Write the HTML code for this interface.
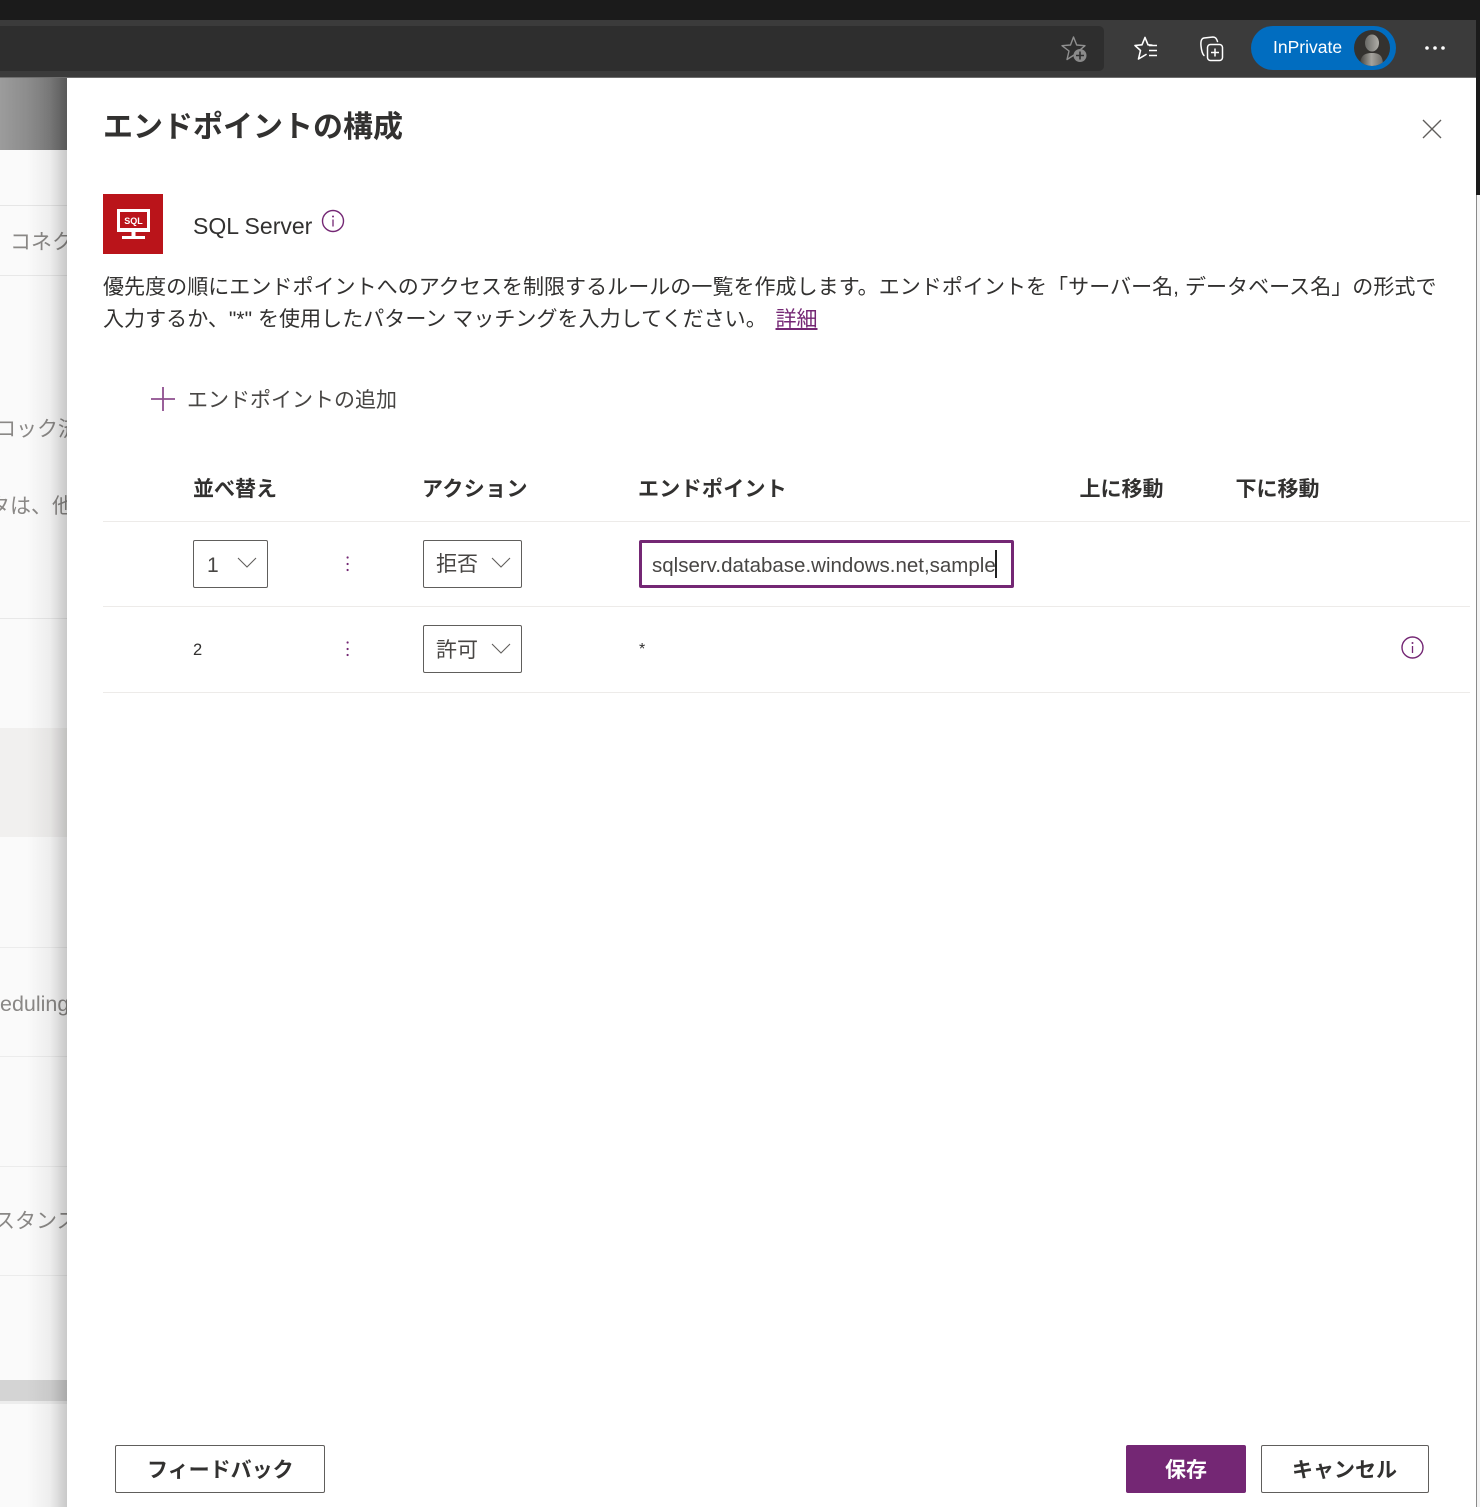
<!DOCTYPE html>
<html lang="ja">
<head>
<meta charset="utf-8">
<style>
html,body{margin:0;padding:0;background:#fff}
#p{position:relative;width:1480px;height:1507px;overflow:hidden;background:#fff;font-family:"Liberation Sans","Noto Sans CJK JP",sans-serif;color:#323130}
#p div,#p span.t,#p svg{position:absolute}
.t{position:absolute;white-space:nowrap;line-height:1}
.b{font-weight:700}
.line{background:#edebe9;height:1px}
.box{border:1px solid #605e5c;border-radius:2px;box-sizing:border-box;background:#fff}
</style>
</head>
<body>
<div id="p">
  <!-- browser chrome -->
  <div style="left:0;top:0;width:1480px;height:20px;background:#1b1b1b"></div>
  <div style="left:0;top:20px;width:1476px;height:58px;background:#3b3b3b"></div>
  <div style="left:1476px;top:20px;width:4px;height:175px;background:#1b1b1b"></div>
  <div style="left:0;top:77px;width:1476px;height:1px;background:#6e6e6e"></div>
  <div style="left:0;top:26px;width:1104px;height:45px;background:#2e2e2e;border-radius:0 5px 5px 0"></div>

  <!-- favorite add icon -->
  <svg style="left:1058px;top:34px" width="32" height="30" viewBox="0 0 32 30" fill="none">
    <path d="M15.5 3 L18.7 11 L27 11.7 L20.7 17 L22.5 25 L16 21 L9 25.5 L11 17 L4 11.7 L12.5 11 Z" stroke="#8f8f8f" stroke-width="1.4" stroke-linejoin="round"/>
    <circle cx="22" cy="21.5" r="6.5" fill="#8a8a8a"/>
    <path d="M22 17.5v8M18 21.5h8" stroke="#2e2e2e" stroke-width="1.6"/>
  </svg>
  <!-- favorites icon -->
  <svg style="left:1132px;top:34px" width="30" height="28" viewBox="0 0 30 28" fill="none">
    <path d="M13 3.5 L16 10.8 L20 11.2 M3 11.5 L10 10.8 L13 3.5 M3 11.5 L8.5 16.5 L6.5 25 L14 20.5" stroke="#fff" stroke-width="1.6" stroke-linejoin="round" stroke-linecap="round"/>
    <path d="M17 11.5h8M17 16.5h8M17 21.5h8" stroke="#fff" stroke-width="1.5"/>
  </svg>
  <!-- collections icon -->
  <svg style="left:1198px;top:34px" width="30" height="28" viewBox="0 0 30 28" fill="none">
    <rect x="9.5" y="10.5" width="15" height="16" rx="3" stroke="#fff" stroke-width="1.5"/>
    <path d="M17 14.5v8M13 18.5h8" stroke="#fff" stroke-width="1.5"/>
    <path d="M6 21.5 C4.5 20 3.5 17 3 12 C2.6 8 3 4.5 6 4 L15 3 C17.5 3 18.5 4.5 19.5 7.5" stroke="#fff" stroke-width="1.5" stroke-linecap="round"/>
  </svg>
  <!-- InPrivate pill -->
  <div style="left:1251px;top:26px;width:145px;height:44px;background:#016dc0;border-radius:22px"></div>
  <span class="t" style="left:1273px;top:39px;font-size:17.5px;color:#fff">InPrivate</span>
  <svg style="left:1354px;top:30px" width="36" height="36" viewBox="0 0 36 36">
    <defs>
      <clipPath id="av"><circle cx="18" cy="18" r="18"/></clipPath>
      <linearGradient id="g1" x1="0" x2="1" y1="0" y2="0"><stop offset="0" stop-color="#6a6a66"/><stop offset="1" stop-color="#b0aea8"/></linearGradient>
      <linearGradient id="g2" x1="0" x2="1" y1="0" y2="0"><stop offset="0" stop-color="#45433f"/><stop offset=".5" stop-color="#a5a39d"/><stop offset="1" stop-color="#6c6a66"/></linearGradient>
    </defs>
    <g clip-path="url(#av)">
      <rect width="36" height="36" fill="#34322f"/>
      <ellipse cx="18" cy="13" rx="7" ry="8.5" fill="url(#g1)"/>
      <path d="M6 36 C6 26 10 23 18 23 C26 23 29 26 29 36Z" fill="url(#g2)"/>
    </g>
  </svg>
  <!-- more -->
  <svg style="left:1424px;top:44px" width="22" height="8" viewBox="0 0 22 8" fill="#fff">
    <circle cx="3" cy="4" r="1.8"/><circle cx="11" cy="4" r="1.8"/><circle cx="19" cy="4" r="1.8"/>
  </svg>

  <!-- background page behind panel -->
  <div style="left:0;top:78px;width:67px;height:72px;background:linear-gradient(90deg,#9c9c9c,#858585 60%,#6f6f6f)"></div>
  <div style="left:0;top:150px;width:67px;height:1357px;background:#fafafa"></div>
  <div style="left:0;top:205px;width:67px;height:1px;background:#e6e6e6"></div>
  <div style="left:0;top:275px;width:67px;height:1px;background:#e8e8e8"></div>
  <div style="left:0;top:618px;width:67px;height:1px;background:#e8e8e8"></div>
  <div style="left:0;top:728px;width:67px;height:109px;background:#f1f0ef"></div>
  <div style="left:0;top:947px;width:67px;height:1px;background:#ececec"></div>
  <div style="left:0;top:1056px;width:67px;height:1px;background:#ececec"></div>
  <div style="left:0;top:1166px;width:67px;height:1px;background:#ececec"></div>
  <div style="left:0;top:1275px;width:67px;height:1px;background:#ececec"></div>
  <div style="left:0;top:1380px;width:67px;height:21px;background:#d4d4d4"></div>
  <div style="left:0;top:1401px;width:67px;height:3px;background:#ededed"></div>
  <span class="t" style="left:10px;top:232px;font-size:21px;color:#8a8886">コネクタ</span>
  <span class="t" style="left:-5px;top:419px;font-size:21px;color:#8a8886">ロック済み</span>
  <span class="t" style="left:-11px;top:496px;font-size:21px;color:#8a8886">タは、他の</span>
  <span class="t" style="left:0;top:994px;font-size:21.5px;color:#8a8886">eduling</span>
  <span class="t" style="left:-6px;top:1211px;font-size:21px;color:#8a8886">スタンス</span>
  <div style="left:0;top:78px;width:67px;height:1429px;background:linear-gradient(90deg,rgba(0,0,0,0) 0,rgba(0,0,0,0) 40%,rgba(0,0,0,.05) 75%,rgba(0,0,0,.2) 100%)"></div>

  <!-- panel -->
  <div style="left:67px;top:78px;width:1409px;height:1429px;background:#fff"></div>
  <div style="left:1476px;top:195px;width:4px;height:1312px;background:#f4f4f4"></div>
  <div style="left:1476px;top:195px;width:1px;height:1312px;background:#8a8a8a"></div>

  <span class="t b" style="left:103px;top:113px;font-size:30px;color:#323130">エンドポイントの構成</span>
  <svg style="left:1421px;top:118px" width="22" height="22" viewBox="0 0 22 22" fill="none">
    <path d="M2 2 L20 20 M20 2 L2 20" stroke="#605e5c" stroke-width="1.4"/>
  </svg>

  <!-- SQL tile -->
  <div style="left:103px;top:194px;width:60px;height:60px;background:#ba141a"></div>
  <svg style="left:103px;top:194px" width="60" height="60" viewBox="0 0 60 60" fill="none">
    <rect x="14" y="15" width="33" height="23" fill="#fff"/>
    <rect x="17" y="18" width="27" height="16" fill="#ba141a"/>
    <rect x="28.5" y="38" width="4" height="4" fill="#fff"/>
    <rect x="19" y="42" width="23" height="3" fill="#fff"/>
    <text x="30.5" y="30" text-anchor="middle" font-family="Liberation Sans" font-weight="700" font-size="9" fill="#fff">SQL</text>
  </svg>
  <span class="t" style="left:193px;top:215px;font-size:23px;color:#323130">SQL Server</span>
  <svg style="left:321px;top:209px" width="24" height="24" viewBox="0 0 24 24" fill="none">
    <circle cx="12" cy="12" r="10.5" stroke="#742774" stroke-width="1.4"/>
    <path d="M12 10.5v7" stroke="#742774" stroke-width="1.3"/>
    <circle cx="12" cy="7.5" r="1" fill="#742774"/>
  </svg>

  <span class="t" style="left:103px;top:277px;font-size:21px;letter-spacing:.05px">優先度の順にエンドポイントへのアクセスを制限するルールの一覧を作成します。エンドポイントを「サーバー名, データベース名」の形式で</span>
  <span class="t" style="left:103px;top:309px;font-size:21px;letter-spacing:.05px">入力するか、"*" を使用したパターン マッチングを入力してください。</span>
  <span class="t" style="left:775.5px;top:309px;font-size:21px;color:#742774;text-decoration:underline">詳細</span>

  <!-- add -->
  <svg style="left:150px;top:386px" width="26" height="26" viewBox="0 0 26 26">
    <path d="M13 1v24M1 13h24" stroke="#8f4f8f" stroke-width="1.8"/>
  </svg>
  <span class="t" style="left:187px;top:390px;font-size:21px;color:#484644">エンドポイントの追加</span>

  <!-- table head -->
  <span class="t b" style="left:193px;top:479px;font-size:21px">並べ替え</span>
  <span class="t b" style="left:422px;top:479px;font-size:21px;letter-spacing:.4px">アクション</span>
  <span class="t b" style="left:638px;top:479px;font-size:21px;letter-spacing:.3px">エンドポイント</span>
  <span class="t b" style="left:1079.5px;top:479px;font-size:21px">上に移動</span>
  <span class="t b" style="left:1235.5px;top:479px;font-size:21px">下に移動</span>

  <div class="line" style="left:103px;top:521px;width:1367px"></div>
  <div class="line" style="left:103px;top:606px;width:1367px"></div>
  <div class="line" style="left:103px;top:692px;width:1367px"></div>

  <!-- row 1 -->
  <div class="box" style="left:193px;top:540px;width:75px;height:48px"></div>
  <span class="t" style="left:207px;top:555px;font-size:21px;color:#484644">1</span>
  <svg style="left:237px;top:556px" width="20" height="14" viewBox="0 0 20 14" fill="none"><path d="M1 2 L10 11 L19 2" stroke="#605e5c" stroke-width="1.1"/></svg>
  <svg style="left:345px;top:555px" width="6" height="18" viewBox="0 0 6 18" fill="#742774"><circle cx="2.6" cy="2.5" r="1.1"/><circle cx="2.6" cy="9" r="1.1"/><circle cx="2.6" cy="15" r="1.1"/></svg>
  <div class="box" style="left:423px;top:540px;width:99px;height:48px"></div>
  <span class="t" style="left:436px;top:554px;font-size:21px;color:#484644">拒否</span>
  <svg style="left:491px;top:556px" width="20" height="14" viewBox="0 0 20 14" fill="none"><path d="M1 2 L10 11 L19 2" stroke="#605e5c" stroke-width="1.1"/></svg>
  <div style="left:639px;top:540px;width:375px;height:48px;box-sizing:border-box;border:3px solid #742774;border-radius:2px;background:#fff"></div>
  <span class="t" style="left:652px;top:556px;font-size:20.5px;color:#484644">sqlserv.database.windows.net,sample</span>
  <div style="left:995px;top:550px;width:2px;height:28px;background:#222"></div>

  <!-- row 2 -->
  <span class="t" style="left:193px;top:642px;font-size:16.5px;color:#323130">2</span>
  <svg style="left:345px;top:640px" width="6" height="18" viewBox="0 0 6 18" fill="#742774"><circle cx="2.6" cy="2.5" r="1.1"/><circle cx="2.6" cy="9" r="1.1"/><circle cx="2.6" cy="15" r="1.1"/></svg>
  <div class="box" style="left:423px;top:625px;width:99px;height:48px"></div>
  <span class="t" style="left:436px;top:640px;font-size:21px;color:#484644">許可</span>
  <svg style="left:491px;top:642px" width="20" height="14" viewBox="0 0 20 14" fill="none"><path d="M1 2 L10 11 L19 2" stroke="#605e5c" stroke-width="1.1"/></svg>
  <span class="t" style="left:639px;top:642px;font-size:16px;color:#323130">*</span>
  <svg style="left:1401px;top:636px" width="24" height="24" viewBox="0 0 24 24" fill="none">
    <circle cx="11.5" cy="11.5" r="10.5" stroke="#742774" stroke-width="1.4"/>
    <path d="M11.5 10v7" stroke="#742774" stroke-width="1.3"/>
    <circle cx="11.5" cy="7" r="1" fill="#742774"/>
  </svg>

  <!-- footer -->
  <div class="box" style="left:115px;top:1445px;width:210px;height:48px"></div>
  <span class="t b" style="left:147px;top:1460px;font-size:21px">フィードバック</span>
  <div style="left:1126px;top:1445px;width:120px;height:48px;background:#742774;border-radius:2px"></div>
  <span class="t b" style="left:1165px;top:1460px;font-size:21px;color:#fff">保存</span>
  <div class="box" style="left:1261px;top:1445px;width:168px;height:48px"></div>
  <span class="t b" style="left:1292px;top:1460px;font-size:21px">キャンセル</span>
</div>
</body>
</html>
